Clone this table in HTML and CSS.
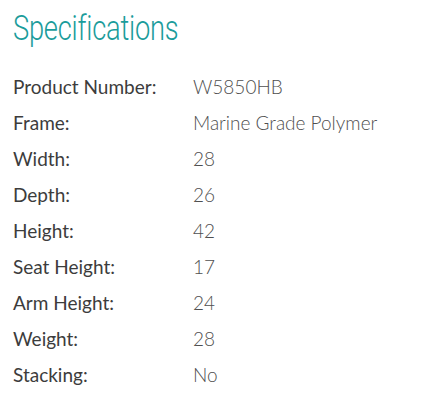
FILE: index.html
```html
<!DOCTYPE html>
<html>
<head>
<meta charset="utf-8">
<link rel="stylesheet" href="styles.css">
</head>
<body>
<section class="specs">
  <h2 class="specs-title"><span class="specs-title-text">Specifications</span></h2>
  <dl class="specs-list">
    <div class="row"><dt>Product Number:</dt><dd>W5850HB</dd></div>
    <div class="row"><dt>Frame:</dt><dd>Marine Grade Polymer</dd></div>
    <div class="row"><dt>Width:</dt><dd>28</dd></div>
    <div class="row"><dt>Depth:</dt><dd>26</dd></div>
    <div class="row"><dt>Height:</dt><dd>42</dd></div>
    <div class="row"><dt>Seat Height:</dt><dd>17</dd></div>
    <div class="row"><dt>Arm Height:</dt><dd>24</dd></div>
    <div class="row"><dt>Weight:</dt><dd>28</dd></div>
    <div class="row"><dt>Stacking:</dt><dd>No</dd></div>
  </dl>
</section>
</body>
</html>
```
FILE: styles.css
```css
html, body {
  margin: 0;
  padding: 0;
  background: #ffffff;
}
.specs {
  padding: 9px 13px 0 13px;
  font-family: "Lato", "Open Sans", sans-serif;
}
.specs-title {
  margin: 0 0 19px 0;
  font-family: "Roboto", "Liberation Sans", sans-serif;
  font-weight: 300;
  font-size: 35px;
  line-height: 40px;
  color: #1b9c9b;
}
.specs-title-text {
  display: inline-block;
  transform: scaleX(0.78);
  transform-origin: left center;
  letter-spacing: -0.3px;
}
.specs-list {
  margin: 0;
  display: flex;
  flex-direction: column;
}
.row {
  display: grid;
  grid-template-columns: 180px 1fr;
  height: 36px;
  align-items: center;
}
.row dt {
  font-size: 19px;
  color: #3c3c3c;
}
.row dd {
  margin: 0;
  font-size: 19px;
  font-weight: 300;
  color: #4f4f4f;
}
```
